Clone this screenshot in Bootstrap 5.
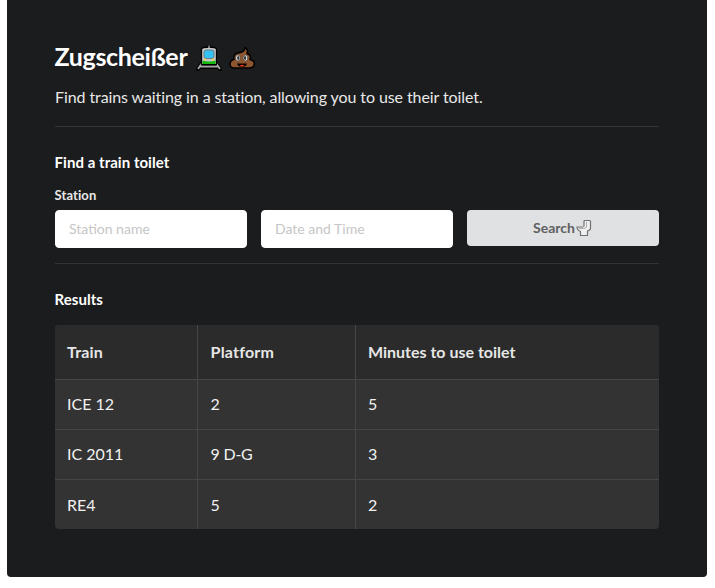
<!DOCTYPE html>
<html lang="en">
<head>
<meta charset="utf-8">
<meta name="viewport" content="width=device-width, initial-scale=1">
<title>Zugscheißer</title>
<link href="https://cdn.jsdelivr.net/npm/bootstrap@5.3.0/dist/css/bootstrap.min.css" rel="stylesheet">
<style>
body{font-family:Lato,sans-serif;font-size:14px;background:#fff;overflow:hidden;font-variant-ligatures:none}
.panel{width:700px;height:577px;margin-left:7px;padding:41px 48px 0;background:#1b1c1d;border-radius:0 0 4px 4px}
.title{font-size:25px;line-height:33px;font-weight:700;height:33px;letter-spacing:-.33px}
.title span{padding-bottom:2px;margin-left:-.5px}
.train{margin-left:8px;margin-right:5px}
.intro{font-size:16px;line-height:24px;margin-top:11px;margin-bottom:17px;color:#e8e8e8;letter-spacing:-.09px}
.rule{height:1px;background:#323334}
.section-title{font-size:15px;line-height:20px;font-weight:700;padding-top:25px;margin-bottom:14px;margin-left:-.4px;letter-spacing:.04px}
.field-label{font-size:13px;line-height:18px;font-weight:700;color:#e8e8e8;margin-bottom:6px;margin-left:-.5px;letter-spacing:.1px}
.search-row{gap:14px;margin-bottom:15px}
.search-row>*{width:192px}
.search-row .form-control{height:38px;padding:0 13px 2px;border:1px solid #fff;border-radius:4px;font-size:14px;background:#fff}
.form-control::placeholder{color:#c6c6c6}
.search-btn{height:36px;padding:0;border:0;border-radius:4px;background:#e0e1e2;color:#5f6061;font-size:14px;font-weight:700}
.search-btn span{padding-bottom:2px}
.results{table-layout:fixed;width:604px;margin-top:16px;border-collapse:separate;border-spacing:0;background:#333;border-radius:4px;overflow:hidden;color:#f1f1f1;font-size:16px;line-height:24px}
.results th,.results td{padding:0 12px;vertical-align:middle}
.results th{height:54px;background:#2b2b2b;color:#e6e6e6}
.results td{height:50px;padding-bottom:2px;border-top:1px solid #464646}
.results tr:last-child td{padding-bottom:0}
.results tr>*+*{border-left:1px solid #464646}
.results tr>:nth-child(2){padding-left:12.6px}
.results td:nth-child(2){letter-spacing:-.25px}
.results th:nth-child(2){letter-spacing:.2px}
.results th:first-child{letter-spacing:.2px}
</style>
<script src="https://cdn.jsdelivr.net/npm/bootstrap@5.3.0/dist/js/bootstrap.bundle.min.js"></script>
</head>
<body>
<main class="panel">
  <h1 class="title d-flex align-items-center text-white mb-0"><span>Zugscheißer</span>
    <svg class="train flex-shrink-0" width="28" height="28" viewBox="0 0 28 28" aria-hidden="true">
      <path d="M7 19L3 25M21 19l4 6M5 23h18" fill="none" stroke="#000" stroke-width="4" stroke-linecap="round"/>
      <path d="M7 19L3 25M21 19l4 6M5 22.500h18" fill="none" stroke="#a6a6a6" stroke-width="1.800"/>
      <path d="M14 1v3" stroke="#000" stroke-width="3"/>
      <path d="M6.500 20.500V5.500q0-2.500 7.500-2.500t7.500 2.500v15z" fill="#c4c8ca" stroke="#000" stroke-width="1.300" stroke-linejoin="round"/>
      <path d="M14 1.500v3" stroke="#ddd"/>
      <rect x="9" y="6" width="10" height="8.500" rx="2" fill="#35c1f1" stroke="#686868" stroke-width=".8"/>
      <path d="M7.500 16.500q6.500 2 13 0v3.500h-13z" fill="#16b80c"/>
      <circle cx="10" cy="15.500" r="1" fill="#ffd633"/><circle cx="18" cy="15.500" r="1" fill="#ffd633"/>
    </svg>
    <svg class="flex-shrink-0" width="28" height="28" viewBox="0 0 28 28" aria-hidden="true">
      <path d="M17 3.500c3 2 3 4 2 6 3 1 4 3 3 6 4 1 5 3 4 6-1 2-3 2.500-5 2.500H6c-3 0-4-2-4-4 0-3 2-4 4-4.500-1-4 1-6 4-6.500 4-.5 7-2 7-5.500z" fill="#8e562e" stroke="#000" stroke-width="1.600" stroke-linejoin="round"/>
      <ellipse cx="10" cy="14" rx="2.300" ry="3" fill="#fff" stroke="#222" stroke-width=".6"/>
      <ellipse cx="17.400" cy="14" rx="2.300" ry="3" fill="#fff" stroke="#222" stroke-width=".6"/>
      <ellipse cx="10.300" cy="14" rx="1.200" ry="1.900" fill="#333"/><ellipse cx="17.100" cy="14" rx="1.200" ry="1.900" fill="#333"/>
      <path d="M9 19.500h10q-1 3.500-5 3.500T9 19.500z" fill="#000"/><path d="M11.500 21.700q2.500-2 5 0-2.500 1.800-5 0z" fill="#f03a17"/>
    </svg>
  </h1>
  <p class="intro">Find trains waiting in a station, allowing you to use their toilet.</p>
  <div class="rule"></div>
  <h2 class="section-title text-white">Find a train toilet</h2>
  <form>
    <label for="station" class="field-label d-block">Station</label>
    <div class="search-row d-flex align-items-start">
      <input id="station" class="form-control" placeholder="Station name">
      <input class="form-control" placeholder="Date and Time" aria-label="Date and Time">
      <button type="button" class="search-btn btn d-flex align-items-center justify-content-center"><span>Search</span><svg width="18" height="18" viewBox="0 0 18 18" aria-hidden="true">
        <path d="M9 7.500V2.500Q9 1.500 10 1.500H14.500Q15.500 1.500 15.500 2.500V9.500Q15.500 11 12.500 12V16.500H5.500V12.500Q2 11 2 8H8V7.500" fill="#f0f0f0" stroke="#707070" stroke-width="1.200" stroke-linejoin="round"/>
        <path d="M11.500 3v5Q11 9.500 8.500 9.500H4" fill="none" stroke="#aaa"/>
      </svg></button>
    </div>
  </form>
  <div class="rule"></div>
  <h2 class="section-title text-white">Results</h2>
  <table class="results mb-0">
    <colgroup><col style="width:142px"><col style="width:158px"><col></colgroup>
    <thead><tr><th>Train</th><th>Platform</th><th>Minutes to use toilet</th></tr></thead>
    <tbody>
      <tr><td>ICE 12</td><td>2</td><td>5</td></tr>
      <tr><td>IC 2011</td><td>9 D-G</td><td>3</td></tr>
      <tr><td>RE4</td><td>5</td><td>2</td></tr>
    </tbody>
  </table>
</main>
</body>
</html>
